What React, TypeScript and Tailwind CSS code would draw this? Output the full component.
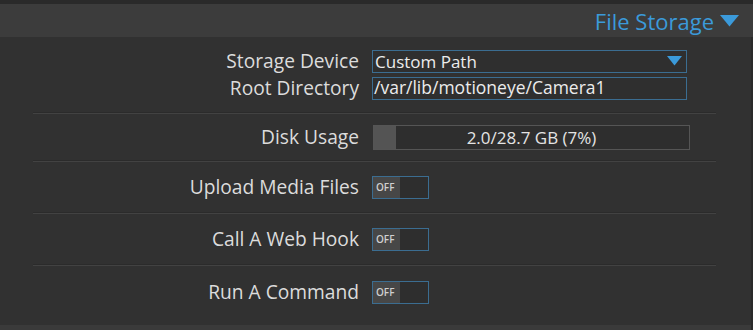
import React from "react";

const font = { fontFamily: '"Open Sans", "Noto Sans", sans-serif' };

function Label({ children }: { children: React.ReactNode }) {
  return (
    <div className="w-[359px] shrink-0 text-right text-[19.2px] leading-none text-[#dcdcdc]">
      {children}
    </div>
  );
}

function Toggle() {
  return (
    <div className="ml-[13px] flex h-[23px] w-[57px] border border-[#3b6d91] bg-[#2e2e2e]">
      <div className="flex w-[27px] items-center bg-[#474747] pl-[3px] text-[10px] font-semibold leading-none text-[#d0d0d0]">
        OFF
      </div>
    </div>
  );
}

function Sep() {
  return (
    <div className="ml-[33px] mr-[35px]">
      <div className="h-px bg-[#2b2b2b]" />
      <div className="h-px bg-[#424242]" />
    </div>
  );
}

export default function App() {
  return (
    <div style={font} className="flex h-[330px] w-[753px] flex-col overflow-hidden bg-[#2a2a2a]">
      <div className="h-[4px] bg-[#2a2a2a]" />
      <div className="flex h-[33px] items-center justify-end bg-[#3c3c3c] pr-[14px]">
        <span className="text-[22px] leading-none text-[#3b9ada]">File Storage</span>
        <svg className="ml-[6px]" width="19" height="12" viewBox="0 0 19 12">
          <path d="M0 0 H19 L9.5 11.5 Z" fill="#3b9ada" />
        </svg>
      </div>
      <div className="flex flex-1 flex-col bg-[#313131] mr-[2px]">
        <div className="flex h-[75px] flex-col pt-[12px]">
          <div className="flex h-[24px] items-center">
            <Label>Storage Device</Label>
            <div className="ml-[13px] flex h-[23px] w-[315px] items-center justify-between border border-[#3b6d91] bg-[#2f2f2f] pl-[2px] pr-[4px]">
              <span className="text-[17px] leading-none text-[#ececec]">Custom Path</span>
              <svg width="15" height="10" viewBox="0 0 15 10">
                <path d="M0 0 H15 L7.5 9.5 Z" fill="#3b9ada" />
              </svg>
            </div>
          </div>
          <div className="mt-[3px] flex h-[24px] items-center">
            <Label>Root Directory</Label>
            <div className="ml-[13px] flex h-[23px] w-[315px] items-center border border-[#3b6d91] bg-[#2f2f2f] pl-[1px]">
              <span className="text-[17.5px] leading-none text-[#ececec]">/var/lib/motioneye/Camera1</span>
            </div>
          </div>
        </div>
        <Sep />
        <div className="flex h-[46px] items-center">
          <Label>Disk Usage</Label>
          <div className="relative ml-[14px] flex h-[25px] w-[317px] items-center justify-center border border-[#555555] bg-[#2e2e2e]">
            <div className="absolute left-0 top-0 h-full w-[22px] bg-[#545454]" />
            <span className="relative text-[17px] leading-none text-[#e4e4e4]">2.0/28.7 GB (7%)</span>
          </div>
        </div>
        <Sep />
        <div className="flex h-[50px] items-center">
          <Label>Upload Media Files</Label>
          <Toggle />
        </div>
        <Sep />
        <div className="flex h-[50px] items-center">
          <Label>Call A Web Hook</Label>
          <Toggle />
        </div>
        <Sep />
        <div className="flex h-[52px] items-center">
          <Label>Run A Command</Label>
          <Toggle />
        </div>
        <div className="flex-1" />
        <div className="h-[5px] bg-[#3a3a3a]" />
      </div>
    </div>
  );
}
